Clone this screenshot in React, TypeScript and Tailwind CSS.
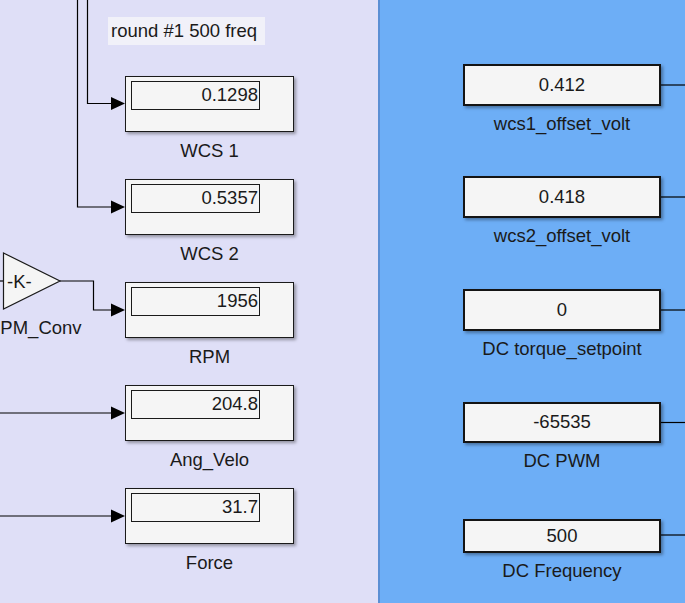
import React from 'react';

const font = "font-['Liberation_Sans',Arial,sans-serif]";

// Display block (left subsystem): outer frame with a numeric readout and a caption beneath
const Display = ({ value, label }: { value: string; label: string }) => (
  <div className="w-[169px] flex flex-col items-center">
    <div className="w-full h-[56px] bg-[#f5f5f5] border border-[#1a1a1a] shadow-[2px_2px_3px_rgba(0,0,0,0.35)] pl-[5px] pt-[4px]">
      <div className="w-[129px] h-[29px] border border-[#1a1a1a] flex items-center justify-end pr-[1px] text-[18.5px] leading-none text-[#1a1a1a]">
        {value}
      </div>
    </div>
    <div className="mt-[8px] text-[18.5px] leading-[21px] text-[#1a1a1a]">{label}</div>
  </div>
);

// Constant block (right subsystem)
const Constant = ({ h, value, label, extra = '' }: { h: string; value: string; label: string; extra?: string }) => (
  <div className={`w-[198px] flex flex-col items-center ${extra}`}>
    <div className={`w-full ${h} bg-[#f5f5f5] border-2 border-[#141414] shadow-[2px_2px_3px_rgba(0,0,0,0.35)] flex items-center justify-center text-[18.5px] leading-none text-[#1a1a1a]`}>
      {value}
    </div>
    <div className="mt-[7px] text-[18.5px] leading-[21px] text-[#1a1a1a] whitespace-nowrap">{label}</div>
  </div>
);

const Arrow = ({ y }: { y: number }) => (
  <polygon points={`111,${y - 6.5} 125,${y} 111,${y + 6.5}`} fill="#000" />
);

export default function App() {
  return (
    <div className={`w-[685px] h-[603px] flex overflow-hidden ${font}`}>
      {/* left area */}
      <div className="relative w-[378px] h-full bg-[#dfdff7] shrink-0 overflow-hidden">
        <svg className="absolute inset-0" width="378" height="603">
          <g stroke="#000" strokeWidth="1.2" fill="none">
            <polyline points="87.5,0 87.5,103.5 112,103.5" />
            <polyline points="77.5,0 77.5,207 112,207" />
            <polyline points="60,281 93.5,281 93.5,310 112,310" />
            <line x1="0" y1="413" x2="112" y2="413" />
            <line x1="0" y1="516" x2="112" y2="516" />
          </g>
          <Arrow y={103.5} />
          <Arrow y={207} />
          <Arrow y={310} />
          <Arrow y={413} />
          <Arrow y={516} />
          {/* gain */}
          <line x1="0" y1="281" x2="3" y2="281" stroke="#000" strokeWidth="1.2" />
          <polygon points="3.5,253 60,281 3.5,309" fill="#f5f5f5" stroke="#1a1a1a" strokeWidth="1.2" />
        </svg>

        <div className="absolute left-[108px] top-[17px] h-[28px] w-[157px] bg-[#f1f1f9] flex items-center pl-[3px] text-[18.5px] leading-none text-[#1a1a1a] whitespace-nowrap">
          round #1 500 freq
        </div>

        <div className="absolute left-[7px] top-[271px] text-[18.5px] leading-[21px] text-[#1a1a1a]">-K-</div>
        <div className="absolute left-[-13px] top-[317px] text-[18.5px] leading-[21px] text-[#1a1a1a] whitespace-nowrap">RPM_Conv</div>

        <div className="absolute left-[125px] top-[76px] flex flex-col gap-[18px]">
          <Display value="0.1298" label="WCS 1" />
          <Display value="0.5357" label="WCS 2" />
          <Display value="1956" label="RPM" />
          <Display value="204.8" label="Ang_Velo" />
          <Display value="31.7" label="Force" />
        </div>
      </div>

      {/* right area */}
      <div className="relative flex-1 h-full bg-[#6daef6] border-l-2 border-[#5b8fd4] overflow-hidden">
        <svg className="absolute inset-0" width="305" height="603">
          <g stroke="#000" strokeWidth="1.2">
            <line x1="281" y1="85" x2="305" y2="85" />
            <line x1="281" y1="197" x2="305" y2="197" />
            <line x1="281" y1="310" x2="305" y2="310" />
            <line x1="281" y1="422.5" x2="305" y2="422.5" />
            <line x1="281" y1="535" x2="305" y2="535" />
          </g>
        </svg>
        <div className="relative pl-[83px] pt-[64px] flex flex-col gap-[43px]">
          <Constant h="h-[42px]" value="0.412" label="wcs1_offset_volt" extra="-mb-[1px]" />
          <Constant h="h-[42px]" value="0.418" label="wcs2_offset_volt" />
          <Constant h="h-[42px]" value="0" label="DC torque_setpoint" />
          <Constant h="h-[41px]" value="-65535" label="DC PWM" />
          <Constant h="h-[34px]" value="500" label="DC Frequency" extra="mt-[5px]" />
        </div>
      </div>
    </div>
  );
}
